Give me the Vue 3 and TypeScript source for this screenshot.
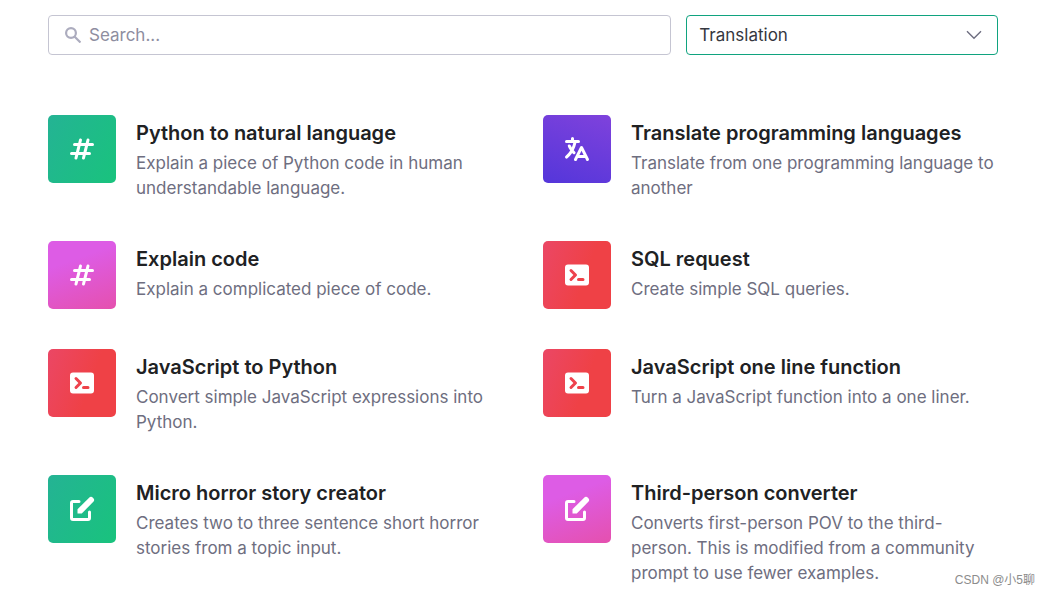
<script setup lang="ts">
import { ref } from 'vue'

type Icon = 'hash' | 'translate' | 'terminal' | 'edit'
type Tone = 'green' | 'violet' | 'pink' | 'red'

interface Example {
  title: string
  text: string
  icon: Icon
  tone: Tone
}

const query = ref('')
const category = ref('Translation')

const paths: Record<Icon, string[]> = {
  hash: [
    'M9.243 3.03a1 1 0 01.727 1.213L9.53 6h2.94l.56-2.243a1 1 0 111.94.486L14.53 6H17a1 1 0 110 2h-2.97l-1 4H15a1 1 0 110 2h-2.47l-.56 2.242a1 1 0 11-1.94-.485L10.47 14H7.53l-.56 2.242a1 1 0 11-1.94-.485L5.47 14H3a1 1 0 110-2h2.97l1-4H5a1 1 0 110-2h2.47l.56-2.243a1 1 0 011.213-.727zM9.03 8l-1 4h2.938l1-4H9.031z',
  ],
  translate: [
    'M7 2a1 1 0 011 1v1h3a1 1 0 110 2H9.578a18.87 18.87 0 01-1.724 4.78c.29.354.596.696.914 1.026a1 1 0 11-1.44 1.389c-.188-.196-.373-.396-.554-.6a19.098 19.098 0 01-3.107 3.567 1 1 0 01-1.334-1.49 17.087 17.087 0 003.13-3.733 18.992 18.992 0 01-1.487-2.494 1 1 0 111.79-.89c.234.47.489.928.764 1.372.417-.934.752-1.913.997-2.927H3a1 1 0 110-2h3V3a1 1 0 011-1zm6 6a1 1 0 01.894.553l2.991 5.982a.869.869 0 01.02.037l.99 1.98a1 1 0 11-1.79.895L15.383 16h-4.764l-.724 1.447a1 1 0 11-1.788-.894l.99-1.98.019-.038 2.99-5.982A1 1 0 0113 8zm-1.382 6h2.764L13 11.236 11.618 14z',
  ],
  terminal: [
    'M2 5a2 2 0 012-2h12a2 2 0 012 2v10a2 2 0 01-2 2H4a2 2 0 01-2-2V5zm3.293 1.293a1 1 0 011.414 0l3 3a1 1 0 010 1.414l-3 3a1 1 0 01-1.414-1.414L7.586 10 5.293 7.707a1 1 0 010-1.414zM11 12a1 1 0 100 2h3a1 1 0 100-2h-3z',
  ],
  edit: [
    'M17.414 2.586a2 2 0 00-2.828 0L7 10.172V13h2.828l7.586-7.586a2 2 0 000-2.828z',
    'M2 6a2 2 0 012-2h4a1 1 0 010 2H4v10h10v-4a1 1 0 112 0v4a2 2 0 01-2 2H4a2 2 0 01-2-2V6z',
  ],
}

const examples: Example[] = [
  { title: 'Python to natural language', text: 'Explain a piece of Python code in human understandable language.', icon: 'hash', tone: 'green' },
  { title: 'Translate programming languages', text: 'Translate from one programming language to another', icon: 'translate', tone: 'violet' },
  { title: 'Explain code', text: 'Explain a complicated piece of code.', icon: 'hash', tone: 'pink' },
  { title: 'SQL request', text: 'Create simple SQL queries.', icon: 'terminal', tone: 'red' },
  { title: 'JavaScript to Python', text: 'Convert simple JavaScript expressions into Python.', icon: 'terminal', tone: 'red' },
  { title: 'JavaScript one line function', text: 'Turn a JavaScript function into a one liner.', icon: 'terminal', tone: 'red' },
  { title: 'Micro horror story creator', text: 'Creates two to three sentence short horror stories from a topic input.', icon: 'edit', tone: 'green' },
  { title: 'Third-person converter', text: 'Converts first-person POV to the third-person. This is modified from a community prompt to use fewer examples.', icon: 'edit', tone: 'pink' },
]
</script>

<template>
  <main class="page">
    <form class="filters" @submit.prevent>
      <label class="search">
        <svg class="search-icon" viewBox="0 0 16 16" aria-hidden="true">
          <circle cx="6" cy="6" r="4.9" />
          <path d="M9.5 9.5l6 6" />
        </svg>
        <input v-model="query" type="text" placeholder="Search..." aria-label="Search examples" />
      </label>
      <div class="category">
        <select v-model="category" aria-label="Category">
          <option>Translation</option>
        </select>
        <svg class="chevron" viewBox="0 0 16 10" aria-hidden="true">
          <path d="M1 1.2l7 7 7-7" />
        </svg>
      </div>
    </form>

    <section class="grid">
      <article v-for="item in examples" :key="item.title" class="example">
        <div class="tile" :class="item.tone">
          <svg viewBox="0 0 20 20" aria-hidden="true">
            <path v-for="d in paths[item.icon]" :key="d" :d="d" fill-rule="evenodd" />
          </svg>
        </div>
        <div class="body">
          <h2>{{ item.title }}</h2>
          <p>{{ item.text }}</p>
        </div>
      </article>
    </section>

    <span class="watermark">CSDN @小5聊</span>
  </main>
</template>

<style>
body {
  margin: 0;
  background: #fff;
  overflow: hidden;
}
</style>

<style scoped>
.page {
  position: relative;
  box-sizing: border-box;
  padding: 15px 52px 8px 48px;
  font-family: Inter, "Liberation Sans", sans-serif;
  color: #202123;
}
.filters {
  display: grid;
  grid-template-columns: 2fr 1fr;
  gap: 15px;
}
.search,
.category {
  box-sizing: border-box;
  display: flex;
  align-items: center;
  height: 40px;
  border: 1px solid #c5c5d2;
  border-radius: 4px;
}
.search {
  gap: 8px;
  padding: 0 16px;
}
.search-icon {
  flex: none;
  width: 16px;
  height: 16px;
  fill: none;
  stroke: #acacbe;
  stroke-width: 2.2;
}
.search input {
  flex: 1;
  min-width: 0;
  padding: 0;
  border: 0;
  outline: 0;
  background: none;
  font: inherit;
  font-size: 17px;
  color: #353740;
}
.search input::placeholder {
  color: #8e8ea0;
  opacity: 1;
}
.category {
  position: relative;
  border-color: #10a37f;
}
.category select {
  width: 100%;
  height: 100%;
  padding: 0 40px 0 12px;
  border: 0;
  outline: 0;
  appearance: none;
  background: none;
  font: inherit;
  font-size: 17px;
  color: #353740;
}
.chevron {
  position: absolute;
  right: 15px;
  width: 16px;
  height: 10px;
  fill: none;
  stroke: #6e6e80;
  stroke-width: 1.4;
  pointer-events: none;
}
.grid {
  display: grid;
  grid-template-columns: 1fr 1fr;
  gap: 40px;
  margin-top: 60px;
}
.example {
  display: flex;
  align-items: flex-start;
  gap: 20px;
}
.tile {
  flex: none;
  display: flex;
  align-items: center;
  justify-content: center;
  width: 68px;
  height: 68px;
  border-radius: 5px;
}
.tile svg {
  width: 30px;
  height: 30px;
  fill: #fff;
}
.green {
  background: linear-gradient(120deg, #24b394, #19c37d);
}
.violet {
  background: linear-gradient(20deg, #5436da, #7f42dc);
}
.pink {
  background: linear-gradient(160deg, #dd5ce5 30%, #e550ae);
}
.red {
  background: linear-gradient(110deg, #eb4765, #ef4146 60%);
}
.body {
  flex: 1;
  min-width: 0;
  padding-top: 5px;
}
h2 {
  margin: 0 0 5px;
  font-size: 20px;
  font-weight: 600;
  line-height: 26px;
}
p {
  margin: 0;
  font-size: 17px;
  line-height: 25px;
  color: #6e6e80;
}
.watermark {
  position: absolute;
  right: 15px;
  bottom: 6px;
  font-family: "Liberation Sans", "Noto Sans CJK SC", sans-serif;
  font-size: 12px;
  line-height: 16px;
  color: #8c8c8c;
}
</style>
